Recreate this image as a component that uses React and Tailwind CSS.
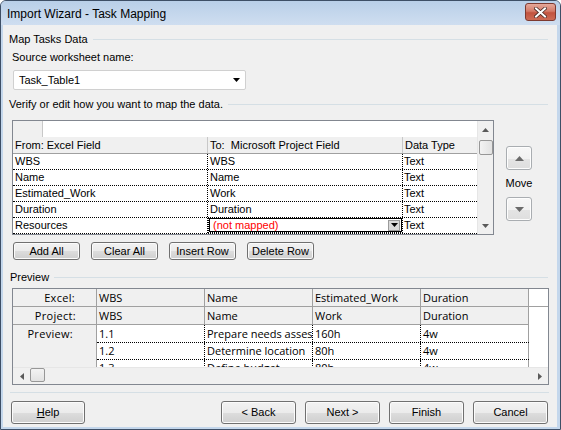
import React from 'react';

const mapRows = [
    ['WBS', 'WBS', 'Text'],
    ['Name', 'Name', 'Text'],
    ['Estimated_Work', 'Work', 'Text'],
    ['Duration', 'Duration', 'Text'],
    ['Resources', null, 'Text'],
];

const excelRow = ['WBS', 'Name', 'Estimated_Work', 'Duration'];
const projectRow = ['WBS', 'Name', 'Work', 'Duration'];
const previewRows = [
    ['1.1', 'Prepare needs assessment', '160h', '4w'],
    ['1.2', 'Determine location', '80h', '4w'],
    ['1.3', 'Define budget', '80h', '4w'],
];

const Arrow = ({ dir = 'down', className = '', color = '#000' }) => {
    const pts = {
        down: '0,0 7,0 3.5,4',
        up: '0,4 7,4 3.5,0',
        left: '4,0 4,7 0,3.5',
        right: '0,0 0,7 4,3.5',
    }[dir];
    const horiz = dir === 'left' || dir === 'right';
    return (
        <svg width={horiz ? 4 : 7} height={horiz ? 7 : 4} viewBox={horiz ? '0 0 4 7' : '0 0 7 4'} className={className}>
            <polygon points={pts} fill={color} />
        </svg>
    );
};

const Btn = ({ children, className = '' }) => (
    <div className={`flex items-center justify-center border border-[#707070] rounded-[3px] bg-[linear-gradient(to_bottom,#f2f2f2_0%,#ebebeb_50%,#dddddd_50%,#cfcfcf_100%)] shadow-[inset_0_0_0_1px_#fbfbfb] ${className}`}>
        {children}
    </div>
);

const GroupLabel = ({ children, className = '' }) => (
    <div className={`flex items-center h-[13px] leading-[13px] pl-[6px] pr-[9px] ${className}`}>
        <span className="whitespace-nowrap">{children}</span>
        <div className="flex-1 h-px bg-[#d5dfe5] ml-[5px]"></div>
    </div>
);

const MoveBtn = ({ dir }) => (
    <div className="w-[26px] h-[24px] border border-[#a9adb1] rounded-[3px] bg-[linear-gradient(to_bottom,#f7f7f7_0%,#f1f1f1_55%,#e4e4e4_55%,#dedede_100%)] shadow-[inset_0_0_0_1px_#fdfdfd] flex items-center justify-center">
        <svg width="9" height="5" viewBox="0 0 9 5">
            <polygon points={dir === 'up' ? '0,5 9,5 4.5,0' : '0,0 9,0 4.5,5'} fill="#6b6b6b" />
        </svg>
    </div>
);

const MappingGrid = () => (
    <div className="w-[482px] h-[115px] border border-[#828790] bg-white flex">
        <div className="w-[464px] flex flex-col">
            <div className="h-[16px] flex">
                <div className="w-[30px] bg-[#f0f0f0] border-r border-[#c8c8c8]"></div>
                <div className="flex-1 bg-white"></div>
            </div>
            <div className="h-[17px] flex bg-[#f0f0f0] border-b border-[#a0a0a0] leading-[16px]">
                <div className="w-[195px] pl-[2px] border-r border-[#c8c8c8]">From: Excel Field</div>
                <div className="w-[195px] pl-[2px] border-r border-[#c8c8c8] whitespace-pre">To:  Microsoft Project Field</div>
                <div className="flex-1 pl-[2px]">Data Type</div>
            </div>
            {mapRows.map((r, i) => (
                <div key={i} className="h-[16px] flex border-b border-dotted border-black leading-[15px]">
                    <div className="w-[195px] pl-[2px] border-r border-dotted border-black">{r[0]}</div>
                    {r[1] ? (
                        <div className="w-[195px] pl-[2px] border-r border-dotted border-black">{r[1]}</div>
                    ) : (
                        <div className="w-[195px] -mt-px h-[16px] border border-dotted border-black">
                            <div className="h-full border border-black flex items-center">
                                <span className="flex-1 pl-[3px] text-[#ff0000] leading-[12px]">(not mapped)</span>
                                <div className="w-[12px] h-[11px] mr-[1px] bg-[#d9d9d9] border border-[#9a9a9a] flex items-center justify-center">
                                    <Arrow dir="down" color="#000" />
                                </div>
                            </div>
                        </div>
                    )}
                    <div className="flex-1 pl-[1px]">{r[2]}</div>
                </div>
            ))}
        </div>
        <div className="w-[16px] bg-[#f0f0f0] border-l border-[#e6e6e6] flex flex-col items-center">
            <div className="h-[18px] flex items-center justify-center">
                <Arrow dir="up" color="#5a5a5a" />
            </div>
            <div className="w-[14px] h-[15px] mt-px rounded-[2px] border border-[#979797] bg-[linear-gradient(to_right,#f3f3f3,#e2e2e2)]"></div>
            <div className="flex-1"></div>
            <div className="h-[16px] flex items-center justify-center">
                <Arrow dir="down" color="#5a5a5a" />
            </div>
        </div>
    </div>
);

const PreviewCell = ({ children, last, dotted }) => (
    <div className={`w-[108px] pl-[2px] overflow-hidden whitespace-nowrap border-r ${dotted ? 'border-dotted border-black' : 'border-[#a0a0a0]'}`}>
        {children}
    </div>
);

const PreviewGrid = () => (
    <div className="ml-[9px] w-[537px] h-[97px] border border-[#828790] bg-white flex flex-col font-['Open_Sans',sans-serif] text-[11px]">
        <div className="h-[18px] flex leading-[17px] border-b border-[#a0a0a0]">
            <div className="w-[84px] bg-[#f0f0f0] border-r border-[#a0a0a0] text-right pr-[21px] tracking-[0.3px]">Excel:</div>
            <div className="flex bg-[#f0f0f0]">
                {excelRow.map((c, i) => <PreviewCell key={i}>{c}</PreviewCell>)}
            </div>
            <div className="flex-1 bg-white"></div>
        </div>
        <div className="h-[18px] flex leading-[17px]">
            <div className="w-[84px] bg-[#f0f0f0] border-r border-b border-[#a0a0a0] text-right pr-[20px] tracking-[0.3px]">Project:</div>
            <div className="flex bg-[#f0f0f0] border-b border-[#a0a0a0]">
                {projectRow.map((c, i) => <PreviewCell key={i}>{c}</PreviewCell>)}
            </div>
            <div className="flex-1 bg-white"></div>
        </div>
        {previewRows.map((r, i) => (
            <div key={i} className={`flex overflow-hidden ${i === 0 ? 'h-[18px] leading-[17px]' : i === 1 ? 'h-[17px] leading-[16px]' : 'h-[7px] leading-[16px]'}`}>
                <div className="w-[84px] bg-[#f0f0f0] border-r border-[#a0a0a0] text-right pr-[23px] tracking-[0.3px]">
                    {i === 0 ? 'Preview:' : ''}
                </div>
                <div className="flex border-b border-dotted border-black h-fit">
                    {r.map((c, j) => <PreviewCell key={j} dotted={j < 3}>{c}</PreviewCell>)}
                </div>
                <div className="flex-1 bg-white"></div>
            </div>
        ))}
        <div className="h-[17px] mt-auto flex items-center bg-[#f0f0f0] border-t border-[#e6e6e6]">
            <div className="w-[17px] flex justify-center">
                <Arrow dir="left" color="#5a5a5a" />
            </div>
            <div className="w-[15px] h-[14px] -mt-[2px] rounded-[2px] border border-[#979797] bg-[linear-gradient(to_bottom,#f3f3f3,#e2e2e2)]"></div>
            <div className="flex-1"></div>
            <div className="w-[17px] flex justify-center">
                <Arrow dir="right" color="#5a5a5a" />
            </div>
        </div>
    </div>
);

export default function App() {
    return (
        <div className="w-[561px] h-[430px] bg-[#c4d7ec] border border-[#3e4f66] rounded-t-[6px] flex flex-col font-['Liberation_Sans',Arial,sans-serif] text-[11px] text-black overflow-hidden">
            <div className="h-[24px] flex items-center bg-[linear-gradient(to_bottom,#b9cfe8,#cfdef0)] pl-[6px] pr-[4px]">
                <span className="text-[12px] text-black flex-1 pt-[2px]">Import Wizard - Task Mapping</span>
                <div className="w-[31px] h-[18px] mb-[2px] rounded-[3px] border border-[#7d3a30] bg-[linear-gradient(to_bottom,#e6a99b_0%,#d47a68_45%,#c2533f_55%,#cd6b55_100%)] flex items-center justify-center">
                    <svg width="13" height="11" viewBox="0 0 13 11">
                        <path d="M2 1.5 L11 9.5 M11 1.5 L2 9.5" stroke="#4a2a26" strokeWidth="3.6" strokeLinecap="square" />
                        <path d="M2 1.5 L11 9.5 M11 1.5 L2 9.5" stroke="#ffffff" strokeWidth="2" strokeLinecap="square" />
                    </svg>
                </div>
            </div>
            <div className="flex-1 mx-[2px] mr-[3px] mb-[2px] bg-[#f0f0f0] flex flex-col">
                <GroupLabel className="mt-[8px]">Map Tasks Data</GroupLabel>
                <div className="mt-[5px] h-[13px] leading-[13px] pl-[9px]">Source worksheet name:</div>
                <div className="mt-[6px] ml-[10px] w-[233px] h-[20px] bg-white border border-[#d0d0d0] rounded-[2px] flex items-center pl-[5px] pr-[5px]">
                    <span className="flex-1">Task_Table1</span>
                    <Arrow dir="down" color="#000" />
                </div>
                <GroupLabel className="mt-[8px]">Verify or edit how you want to map the data.</GroupLabel>
                <div className="mt-[9px] ml-[9px] flex">
                    <MappingGrid />
                    <div className="ml-[12px] pt-[26px] flex flex-col items-center w-[26px]">
                        <MoveBtn dir="up" />
                        <div className="mt-[7px] h-[13px] leading-[13px]">Move</div>
                        <div className="mt-[7px]">
                            <MoveBtn dir="down" />
                        </div>
                    </div>
                </div>
                <div className="mt-[7px] ml-[10px] flex gap-[11px]">
                    <Btn className="w-[67px] h-[18px]">Add All</Btn>
                    <Btn className="w-[67px] h-[18px]">Clear All</Btn>
                    <Btn className="w-[67px] h-[18px]">Insert Row</Btn>
                    <Btn className="w-[67px] h-[18px]">Delete Row</Btn>
                </div>
                <GroupLabel className="mt-[11px] pl-[7px]">Preview</GroupLabel>
                <div className="mt-[4px]">
                    <PreviewGrid />
                </div>
                <div className="mt-[7px] mx-[7px] mr-[8px] h-px bg-[#d5dfe5]"></div>
                <div className="mt-[8px] flex pl-[8px] pr-[9px]">
                    <Btn className="w-[74px] h-[23px]"><span><u>H</u>elp</span></Btn>
                    <div className="flex-1"></div>
                    <div className="flex gap-[9px]">
                        <Btn className="w-[75px] h-[23px]">&lt; Back</Btn>
                        <Btn className="w-[75px] h-[23px]">Next &gt;</Btn>
                        <Btn className="w-[75px] h-[23px]">Finish</Btn>
                        <Btn className="w-[75px] h-[23px]">Cancel</Btn>
                    </div>
                </div>
            </div>
        </div>
    );
}
